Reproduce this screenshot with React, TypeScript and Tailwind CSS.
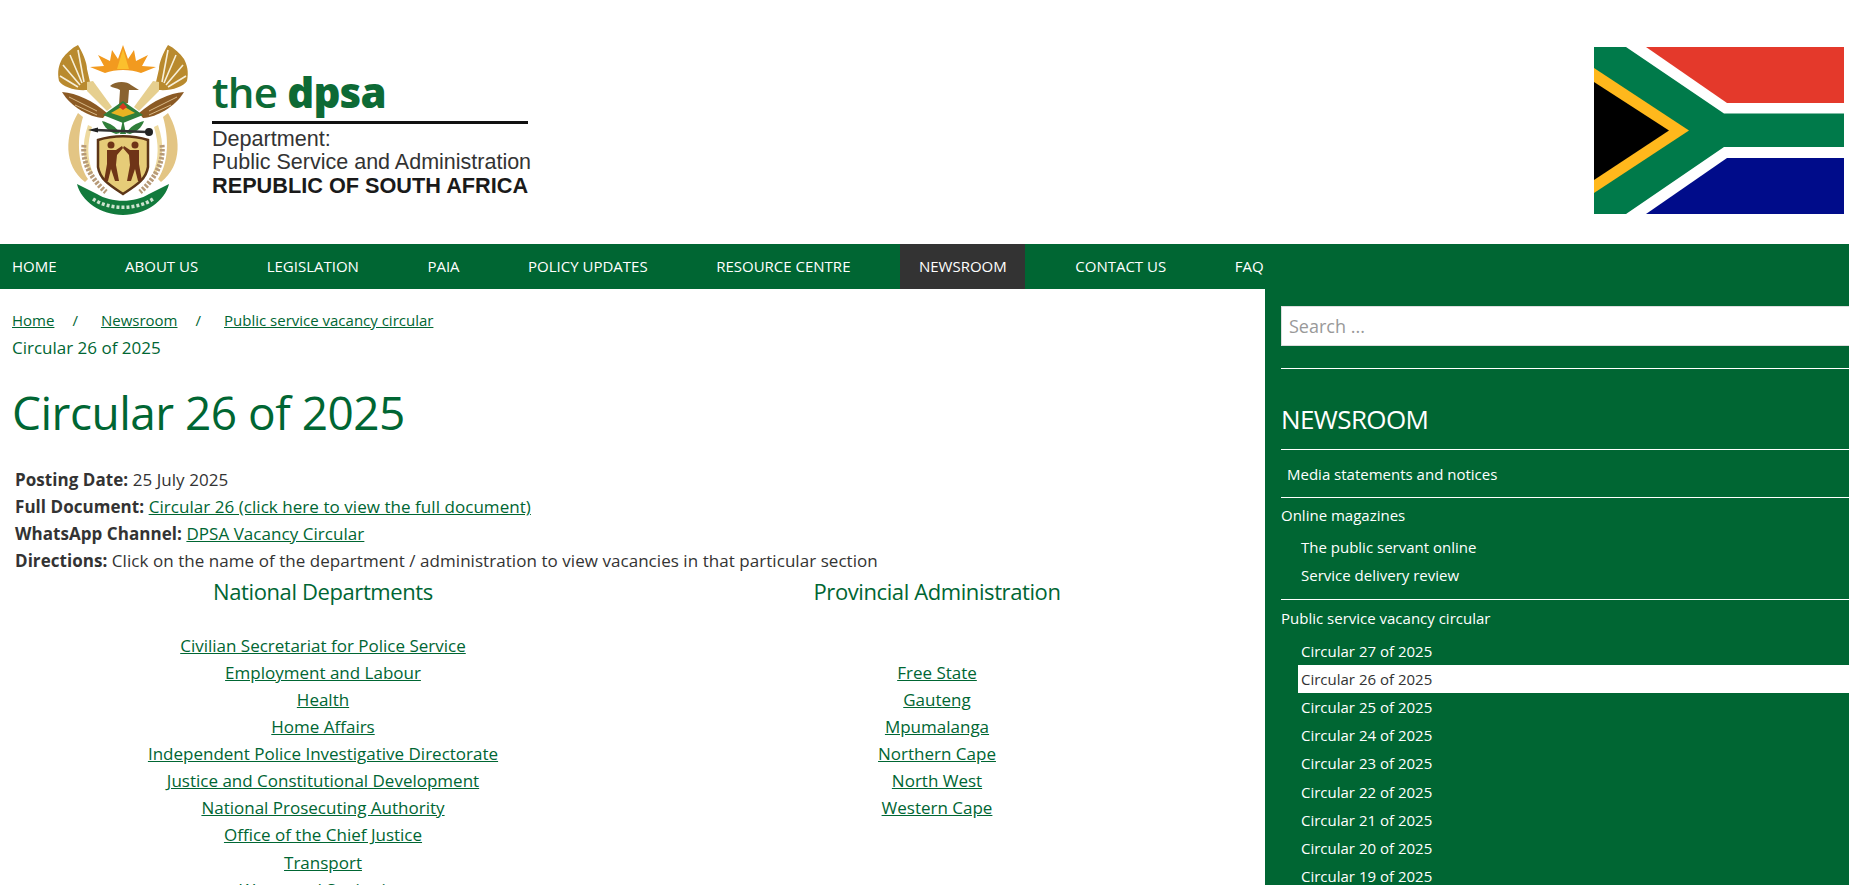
const navItems = ["HOME", "ABOUT US", "LEGISLATION", "PAIA", "POLICY UPDATES", "RESOURCE CENTRE", "NEWSROOM", "CONTACT US", "FAQ"];
const national = ["Civilian Secretariat for Police Service", "Employment and Labour", "Health", "Home Affairs", "Independent Police Investigative Directorate", "Justice and Constitutional Development", "National Prosecuting Authority", "Office of the Chief Justice"];
const provincial = ["Free State", "Gauteng", "Mpumalanga", "Northern Cape", "North West", "Western Cape"];
const circulars = [27, 26, 25, 24, 23, 22, 21, 20, 19];

function CrestHalf() {
  return (
    <g>
      <path d="M21 0 C26 8 30 18 30 24 L33 37 L30 45 C18 46 6 42 2 36 C0 26 2 20 5 14 C9 8 15 3 21 0Z" fill="#b98a2e" />
      <path d="M27 37 L21 5 M25 38 L13 10 M23 40 L6 20 M21 42 L3 31" stroke="#f7efd8" strokeWidth="1.6" fill="none" />
      <path d="M30 37 L36 36 L55 62 L50 66 L30 46Z" fill="#e6cf8f" />
      <path d="M5 47 C20 48 36 56 50 68 L46 73 C32 72 14 62 5 47Z" fill="#8b5a24" />
      <path d="M12 52 L40 66 M18 60 L40 70" stroke="#d8b987" strokeWidth="1" fill="none" />
      <path d="M21 68 C8 90 6 120 28 137 L31 134 C20 118 20 92 26 72Z" fill="#e3c584" />
      <path d="M31 80 C24 100 26 118 34 130 L36 128 C30 114 30 98 35 82Z" fill="#eeda9f" />
      <path d="M27 100 C25 116 33 133 49 147" stroke="#b79a78" strokeWidth="5" strokeDasharray="2.5 1.5" fill="none" />
      <path d="M45 76 C53 78 59 82 63 88 L59 89 C52 87 47 82 45 76Z" fill="#2f7f3a" />
    </g>
  );
}

function Crest() {
  return (
    <svg width="134" height="170" viewBox="0 0 134 170" className="shrink-0 blur-[0.35px]">
      <CrestHalf />
      <g transform="matrix(-1 0 0 1 132 0)">
        <CrestHalf />
      </g>
      <path d="M33 22 L47 21 L41 10 L53 16 L55 5 L61 14 L66 0 L71 14 L77 5 L79 16 L91 10 L85 21 L99 22 L84 28 C74 24 58 24 48 28Z" fill="#f29a1f" />
      <path d="M60 24 L66 4 L72 24Z" fill="#fbc02d" />
      <path d="M53 41 C58 36 70 36 74 40 L82 45 L72 45 L71 58 L62 60 L63 45 C60 43 56 43 53 41Z" fill="#8a6330" />
      <path d="M46 70 L66 56 L86 70 L66 78Z" fill="#2f7f3a" />
      <path d="M54 68 L66 61 L78 68 L66 72Z" fill="#e8b322" />
      <path d="M62 62 L66 58 L70 62 L66 65Z" fill="#d63a1f" />
      <path d="M66 74 L69 89 L63 89Z" fill="#2f7f3a" />
      <path d="M38 85 L90 87" stroke="#333" strokeWidth="2.5" fill="none" />
      <path d="M31 85 L41 82.5 L41 87.5Z" fill="#222" />
      <circle cx="92" cy="87" r="4" fill="#222" />
      <path d="M41 95 C56 90 76 90 91 95 L91 122 C89 135 78 141 66 149 C54 141 43 135 41 122Z" fill="#e6cc78" stroke="#5c3517" strokeWidth="2.5" />
      <g fill="#6f3417">
        <circle cx="54" cy="100" r="3.5" />
        <circle cx="78" cy="100" r="3.5" />
        <path d="M50 105 L59 105 L65 101 L66 103 L60 110 L59 120 L62 136 L58 136 L54 124 L51 136 L47 136 L50 119Z" />
        <path d="M82 105 L73 105 L67 101 L66 103 L72 110 L73 120 L70 136 L74 136 L78 124 L81 136 L85 136 L82 119Z" />
      </g>
      <path d="M20 139 L40 149 C54 158 78 158 92 149 L112 139 C108 156 88 170 66 170 C44 170 24 156 20 139Z" fill="#127a3c" />
      <path d="M36 154 C52 165 80 165 96 154" stroke="#cfe3cf" strokeWidth="3.5" strokeDasharray="3 2" fill="none" />
    </svg>
  );
}

function Flag() {
  return (
    <svg width="250" height="167" viewBox="0 0 250 167" className="shrink-0">
      <rect width="250" height="167" fill="#fff" />
      <polygon points="52,0 250,0 250,56 133,56" fill="#e4392b" />
      <polygon points="52,167 250,167 250,111 133,111" fill="#000c8a" />
      <polygon points="0,0 32,0 130,66.5 250,66.5 250,100 130,100 32,167 0,167" fill="#007a4a" />
      <polygon points="0,21 95,83.5 0,146" fill="#ffb81c" />
      <polygon points="0,35 75,83.5 0,133" fill="#000" />
    </svg>
  );
}

export default function App() {
  return (
    <div className="h-[885px] w-[1849px] overflow-hidden bg-white text-[#333] font-['Open_Sans','Noto_Sans',sans-serif] text-[17px]">
      <header className="flex h-[244px] items-start justify-between pl-[57px] pr-[5px] pt-[45px]">
        <div className="flex items-start gap-[21px]">
          <Crest />
          <div className="w-[322px] pt-[23px] font-['Liberation_Sans',sans-serif]">
            <div className="h-[48px] font-['Open_Sans',sans-serif] text-[42px] font-semibold leading-[48px] tracking-[-0.8px] text-[#0d6a35]">
              the <span className="font-extrabold">dpsa</span>
            </div>
            <div className="mt-[5px] h-[3px] w-[316px] bg-[#111]" />
            <div className="mt-[3px] text-[21.6px] leading-[24px] text-[#333]">Department:</div>
            <div className="text-[21.5px] leading-[23px] text-[#333]">Public Service and Administration</div>
            <div className="text-[21.7px] font-bold leading-[23px] text-[#1a1a1a]">REPUBLIC OF SOUTH AFRICA</div>
          </div>
        </div>
        <div className="pt-[2px]">
          <Flag />
        </div>
      </header>
      <nav className="flex h-[45px] items-center bg-[#006633] text-[15px] text-white">
        <div className="-ml-[6.5px] flex h-full items-center">
          {navItems.map((item) => (
            <a key={item} className={`mr-[31.5px] flex h-full items-center px-[18.5px] ${item === "NEWSROOM" ? "bg-[#333]" : ""}`}>
              {item}
            </a>
          ))}
        </div>
      </nav>
      <div className="flex h-[596px]">
        <main className="w-[1265px] shrink-0 px-[12px] pt-[18px] leading-[27px]">
          <div className="flex text-[15px] leading-[27px] text-[#006633]">
            <a className="underline">Home</a>
            <span className="ml-[18px] mr-[23px]">/</span>
            <a className="underline">Newsroom</a>
            <span className="ml-[18px] mr-[23px]">/</span>
            <a className="underline">Public service vacancy circular</a>
          </div>
          <div className="text-[#006633]">Circular 26 of 2025</div>
          <h1 className="mt-[21px] text-[46px] font-normal leading-[60px] tracking-[-0.5px] text-[#006633]">Circular 26 of 2025</h1>
          <div className="mt-[24px] pl-[3px] tracking-[0.05px]">
            <p><b>Posting Date:</b> 25 July 2025</p>
            <p><b>Full Document:</b> <a className="text-[#006633] underline">Circular 26 (click here to view the full document)</a></p>
            <p><b>WhatsApp Channel:</b> <a className="text-[#006633] underline">DPSA Vacancy Circular</a></p>
            <p><b>Directions:</b> Click on the name of the department / administration to view vacancies in that particular section</p>
          </div>
          <div className="mt-[2px] grid grid-cols-[622px_606px] text-center text-[#006633]">
            <div>
              <h2 className="text-[22px] font-normal leading-[31px] tracking-[-0.4px]">National Departments</h2>
              <div className="mt-[25px] flex flex-col">
                {national.map((n) => (
                  <a key={n} className="underline">{n}</a>
                ))}
                <a className="mt-[1px] underline">Transport</a>
                <a className="underline">Water and Sanitation</a>
              </div>
            </div>
            <div>
              <h2 className="text-[22px] font-normal leading-[31px] tracking-[-0.4px]">Provincial Administration</h2>
              <div className="mt-[52px] flex flex-col">
                {provincial.map((n) => (
                  <a key={n} className="underline">{n}</a>
                ))}
              </div>
            </div>
          </div>
        </main>
        <aside className="w-[584px] shrink-0 overflow-hidden bg-[#006633] pl-[16px] pt-[17px] text-[15px] text-white">
          <input readOnly placeholder="Search ..." className="h-[40px] w-[700px] border border-[#ddd] bg-white px-[7px] text-[18px] text-[#333] outline-none placeholder:text-[#999]" />
          <div className="mt-[22px] h-px bg-white" />
          <h3 className="mt-[33px] text-[26px] font-normal leading-[34px] tracking-[-0.6px]">NEWSROOM</h3>
          <div className="mt-[13px] h-px bg-white" />
          <div className="pb-[10px] pl-[6px] pt-[12px] leading-[25px]">Media statements and notices</div>
          <div className="h-px bg-white" />
          <div className="mt-[5px] leading-[25px]">Online magazines</div>
          <ul className="mt-[5px] pl-[20px]">
            <li className="h-[28px] leading-[28px]">The public servant online</li>
            <li className="h-[28px] leading-[28px]">Service delivery review</li>
          </ul>
          <div className="mt-[10px] h-px bg-white" />
          <div className="mt-[6px] leading-[25px]">Public service vacancy circular</div>
          <ul className="mt-[6px] pl-[17px]">
            {circulars.map((c) => (
              <li key={c} className={`pl-[3px] leading-[28px] ${c === 23 ? "h-[29px]" : "h-[28px]"} ${c === 26 ? "bg-white text-[#333]" : ""}`}>Circular {c} of 2025</li>
            ))}
          </ul>
        </aside>
      </div>
    </div>
  );
}
